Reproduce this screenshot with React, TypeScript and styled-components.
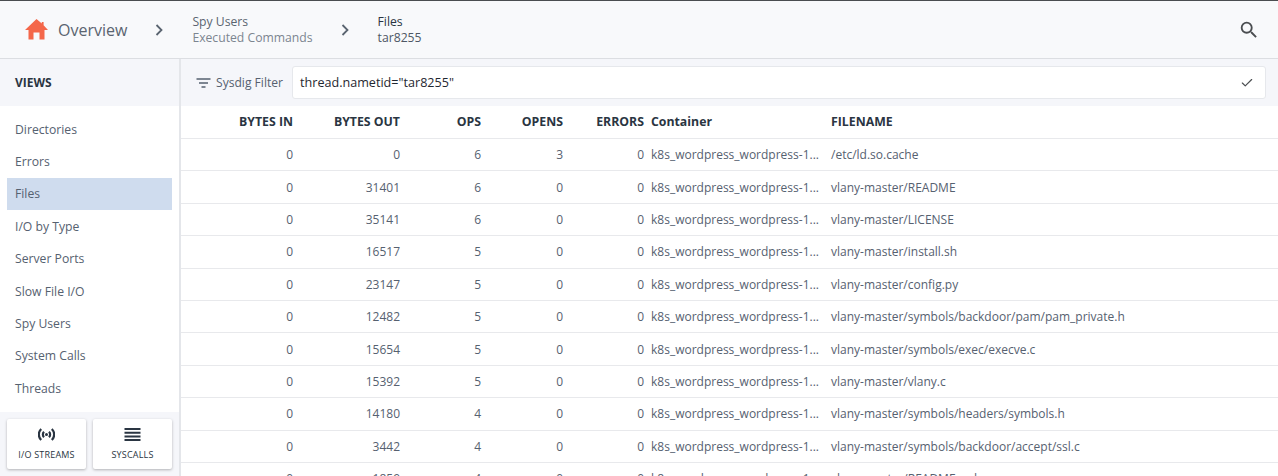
import React from 'react';
import styled, { createGlobalStyle } from 'styled-components';
import { Check } from 'lucide-react';
import { MdSearch } from 'react-icons/md';

const GlobalStyle = createGlobalStyle`
  html, body {
    margin: 0;
    height: 100%;
    overflow: hidden;
    background: #fff;
    font-family: "Open Sans", sans-serif;
  }
`;

const Page = styled.div`
  width: 1278px;
  height: 476px;
  display: flex;
  flex-direction: column;
  overflow: hidden;
  border-top: 1px solid #4a4d50;
  box-sizing: border-box;
`;

const TopBar = styled.header`
  height: 58px;
  flex: none;
  display: flex;
  align-items: center;
  box-sizing: border-box;
  padding: 0 18px 0 25px;
  background: #f8f9fb;
  border-bottom: 1px solid #dcdee2;
`;

const OverviewLabel = styled.span`
  margin-left: 10px;
  font-size: 16px;
  color: #5a6470;
`;

const Chevron = styled.svg`
  width: 10px;
  height: 14px;
  flex: none;
  margin: 0 28px 0 27px;
`;

const Crumb = styled.div`
  display: flex;
  flex-direction: column;
  font-size: 12.2px;
  line-height: 16px;
  color: ${p => (p.$current ? '#2a3542' : '#5a6470')};
`;

const CrumbSub = styled.span`
  color: ${p => (p.$current ? '#4d5764' : '#7c8590')};
`;

const SearchButton = styled.div`
  margin-left: auto;
  display: flex;
  color: #4a4d50;
`;

const Body = styled.div`
  flex: 1;
  display: flex;
  min-height: 0;
`;

const Sidebar = styled.aside`
  width: 179px;
  flex: none;
  display: flex;
  flex-direction: column;
  border-right: 2px solid #e4e6ea;
  background: #fff;
`;

const SidebarHead = styled.div`
  height: 47px;
  flex: none;
  display: flex;
  align-items: center;
  padding-left: 15px;
  background: #f5f6fa;
  font-size: 12px;
  font-weight: 700;
  color: #2a3542;
`;

const ViewList = styled.nav`
  flex: 1;
  padding: 7px 7px 0;
`;

const ViewItem = styled.div`
  height: 32.4px;
  display: flex;
  align-items: center;
  padding-left: 8px;
  font-size: 12.2px;
  color: #566170;
  background: ${p => (p.$active ? '#cfdcee' : 'transparent')};
`;

const ActionBar = styled.div`
  height: 64px;
  flex: none;
  display: flex;
  gap: 7px;
  padding: 7px 7px 0;
  box-sizing: border-box;
  background: #f5f6fa;
`;

const ActionButton = styled.div`
  width: 79px;
  height: 50px;
  display: flex;
  flex-direction: column;
  align-items: center;
  justify-content: center;
  gap: 8px;
  background: #fff;
  border-radius: 2px;
  box-shadow: 0 1px 3px rgba(0, 0, 0, 0.28);
  font-size: 9px;
  line-height: 12px;
  letter-spacing: 0.2px;
  color: #2a3542;
`;

const Main = styled.main`
  flex: 1;
  min-width: 0;
  display: flex;
  flex-direction: column;
`;

const FilterBar = styled.div`
  height: 47px;
  flex: none;
  display: flex;
  align-items: center;
  padding: 0 12px 0 15px;
  box-sizing: border-box;
  background: #f5f6fa;
`;

const FilterLabel = styled.span`
  margin: 0 9px 0 5px;
  font-size: 12.1px;
  color: #566170;
`;

const FilterInput = styled.div`
  flex: 1;
  height: 31px;
  display: flex;
  align-items: center;
  justify-content: space-between;
  padding: 0 11px 0 7px;
  background: #fff;
  border: 1px solid #e6e8ec;
  border-radius: 3px;
  font-size: 12.6px;
  color: #1f2730;
`;

const Table = styled.div`
  flex: 1;
  min-height: 0;
  overflow: hidden;
`;

const columns = '112px 107px 81px 82px 81px 180px 1fr';

const HeadRow = styled.div`
  height: 31px;
  padding-bottom: 1px;
  display: grid;
  grid-template-columns: ${columns};
  align-items: center;
  border-bottom: 1px solid #e8e9ec;
  font-size: 12.3px;
  font-weight: 700;
  color: #2a3542;
`;

const Row = styled.div`
  height: 31.4px;
  display: grid;
  grid-template-columns: ${columns};
  align-items: center;
  border-bottom: 1px solid #e8e9ec;
  font-size: 12px;
  color: #566170;
`;

const Cell = styled.div`
  text-align: ${p => (p.$num ? 'right' : 'left')};
  padding-left: ${p => (p.$num ? '0' : '7px')};
  white-space: nowrap;
`;

const views = ['Directories', 'Errors', 'Files', 'I/O by Type', 'Server Ports', 'Slow File I/O', 'Spy Users', 'System Calls', 'Threads'];

const container = 'k8s_wordpress_wordpress-1...';

const rows = [
  ['0', '0', '6', '3', '0', '/etc/ld.so.cache'],
  ['0', '31401', '6', '0', '0', 'vlany-master/README'],
  ['0', '35141', '6', '0', '0', 'vlany-master/LICENSE'],
  ['0', '16517', '5', '0', '0', 'vlany-master/install.sh'],
  ['0', '23147', '5', '0', '0', 'vlany-master/config.py'],
  ['0', '12482', '5', '0', '0', 'vlany-master/symbols/backdoor/pam/pam_private.h'],
  ['0', '15654', '5', '0', '0', 'vlany-master/symbols/exec/execve.c'],
  ['0', '15392', '5', '0', '0', 'vlany-master/vlany.c'],
  ['0', '14180', '4', '0', '0', 'vlany-master/symbols/headers/symbols.h'],
  ['0', '3442', '4', '0', '0', 'vlany-master/symbols/backdoor/accept/ssl.c'],
  ['0', '1859', '4', '0', '0', 'vlany-master/README.md'],
];

const HomeIcon = () => (
  <svg width="23" height="21" viewBox="0 0 23 21">
    <path fill="#f4674a" d="M11.5 0 L16.8 4.6 V3 H18.6 V6.2 L23 11 H19.5 V20.5 H14.5 V13.5 H8.5 V20.5 H3.5 V11 H0 Z" />
  </svg>
);

const ChevronIcon = () => (
  <Chevron viewBox="0 0 10 14">
    <path d="M2.5 2 L7.5 7 L2.5 12" fill="none" stroke="#5a6470" strokeWidth="1.8" />
  </Chevron>
);

const FilterIcon = () => (
  <svg width="15" height="12" viewBox="0 0 15 12">
    <path d="M0.5 2 H14.5 M3 6 H12 M5.5 10 H9.5" stroke="#566170" strokeWidth="1.3" fill="none" />
  </svg>
);

const StreamIcon = () => (
  <svg width="17" height="13" viewBox="0 0 17 13" fill="none" stroke="#2a3542" strokeWidth="2.2">
    <circle cx="8.5" cy="6.5" r="1.5" fill="#2a3542" stroke="none" />
    <path d="M6 3.8 A3.8 3.8 0 0 0 6 9.2 M11 3.8 A3.8 3.8 0 0 1 11 9.2" />
    <path d="M3.2 1 A7.6 7.6 0 0 0 3.2 12 M13.8 1 A7.6 7.6 0 0 1 13.8 12" />
  </svg>
);

const ListIcon = () => (
  <svg width="17" height="13" viewBox="0 0 17 13">
    <path d="M0.5 1 H16.5 M0.5 4.7 H16.5 M0.5 8.4 H16.5 M0.5 12 H16.5" stroke="#2a3542" strokeWidth="2" />
  </svg>
);

export default function App() {
  return (
    <Page>
      <GlobalStyle />
      <TopBar>
        <HomeIcon />
        <OverviewLabel>Overview</OverviewLabel>
        <ChevronIcon />
        <Crumb>
          <span>Spy Users</span>
          <CrumbSub>Executed Commands</CrumbSub>
        </Crumb>
        <ChevronIcon />
        <Crumb $current>
          <span>Files</span>
          <CrumbSub $current>tar8255</CrumbSub>
        </Crumb>
        <SearchButton>
          <MdSearch size={22} />
        </SearchButton>
      </TopBar>
      <Body>
        <Sidebar>
          <SidebarHead>VIEWS</SidebarHead>
          <ViewList>
            {views.map(v => (
              <ViewItem key={v} $active={v === 'Files'}>{v}</ViewItem>
            ))}
          </ViewList>
          <ActionBar>
            <ActionButton>
              <StreamIcon />
              I/O STREAMS
            </ActionButton>
            <ActionButton>
              <ListIcon />
              SYSCALLS
            </ActionButton>
          </ActionBar>
        </Sidebar>
        <Main>
          <FilterBar>
            <FilterIcon />
            <FilterLabel>Sysdig Filter</FilterLabel>
            <FilterInput>
              thread.nametid="tar8255"
              <Check size={14} color="#4a4d50" />
            </FilterInput>
          </FilterBar>
          <Table>
            <HeadRow>
              <Cell $num>BYTES IN</Cell>
              <Cell $num>BYTES OUT</Cell>
              <Cell $num>OPS</Cell>
              <Cell $num>OPENS</Cell>
              <Cell $num>ERRORS</Cell>
              <Cell>Container</Cell>
              <Cell>FILENAME</Cell>
            </HeadRow>
            {rows.map(r => (
              <Row key={r[5]}>
                <Cell $num>{r[0]}</Cell>
                <Cell $num>{r[1]}</Cell>
                <Cell $num>{r[2]}</Cell>
                <Cell $num>{r[3]}</Cell>
                <Cell $num>{r[4]}</Cell>
                <Cell>{container}</Cell>
                <Cell>{r[5]}</Cell>
              </Row>
            ))}
          </Table>
        </Main>
      </Body>
    </Page>
  );
}
